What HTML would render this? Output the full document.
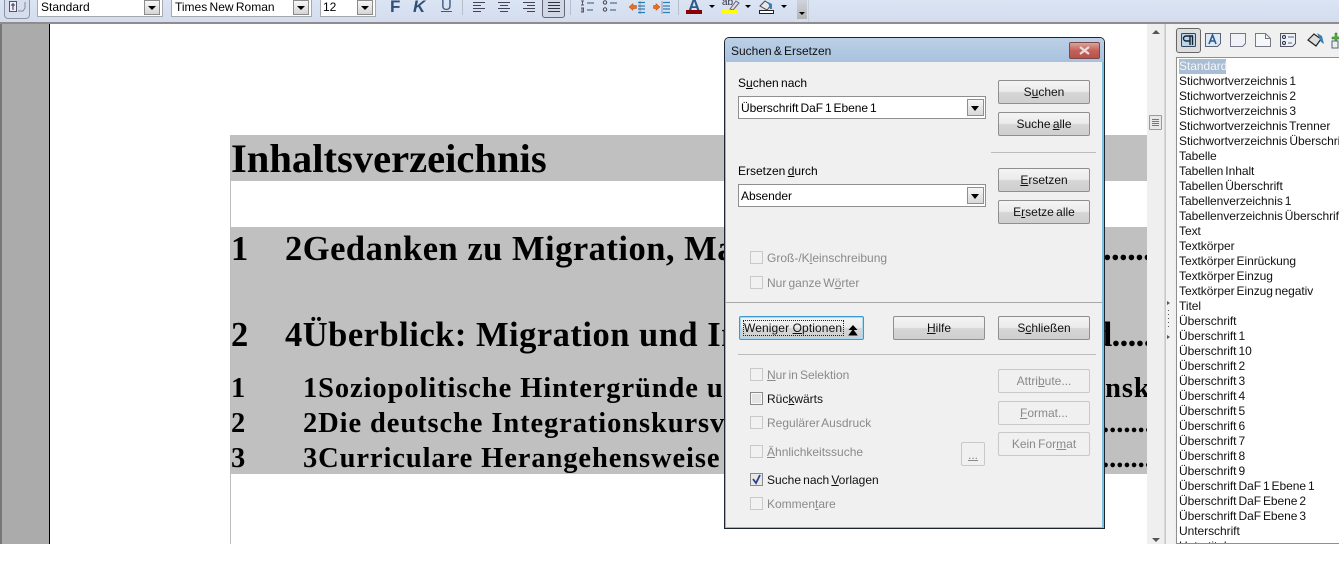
<!DOCTYPE html>
<html><head><meta charset="utf-8">
<style>
html,body{margin:0;padding:0;background:#fff}
#r{position:relative;width:1339px;height:562px;overflow:hidden;background:#fff;font-family:"Liberation Sans",sans-serif;font-size:12px;color:#000}
#r div,#r span.a,#r svg{position:absolute}
.t{white-space:nowrap;line-height:15px}
.dt{position:absolute;left:0;white-space:nowrap;font-family:"Liberation Serif",serif;font-weight:bold;color:#000}
.combo{background:#fff;border:1px solid #a6a9ae;box-sizing:border-box;height:18px;top:-1px}
.drop{width:16px;height:15px;top:0;right:2px;background:linear-gradient(#f6f6f6,#d5d5d5);border:1px solid #8a8a8a;box-sizing:border-box}
.drop:after{content:"";position:absolute;left:3px;top:5px;border:4px solid transparent;border-top:4px solid #000;border-bottom:0}
.btn{box-sizing:border-box;border:1px solid #8f8f8f;border-radius:2px;width:92px;height:24px;background:linear-gradient(#f4f4f4 0,#ebebeb 48%,#d6d6d6 52%,#cfcfcf 100%);text-align:center;line-height:22px;color:#111;word-spacing:-1px}
.btn.d{background:#f0f0f0;border-color:#c8c8c8;color:#8a8a8a}
.cb{width:13px;height:13px;box-sizing:border-box;border:1px solid #c9c9c9;background:#f1f1f1;left:750px}
.lb{left:767px;white-space:nowrap;line-height:15px;color:#8a8a8a;word-spacing:-1.2px}
.dd{box-sizing:border-box;border:1px solid #8f8f8f;background:#fff;left:738px;width:248px;height:23px}
.dd .tx{left:2px;top:4px;line-height:15px;white-space:nowrap;letter-spacing:-.05px;word-spacing:-1.3px}
.dd .dr{right:1px;top:2px;width:17px;height:17px;box-sizing:border-box;border:1px solid #8f8f8f;background:linear-gradient(#f6f6f6,#d8d8d8)}
.dd .dr:after{content:"";position:absolute;left:3px;top:6px;border:4px solid transparent;border-top:5px solid #000;border-bottom:0}
u{text-decoration:underline}
#list div{left:2px;margin-top:1px;white-space:nowrap;line-height:15px;letter-spacing:-.05px;word-spacing:-1.3px;color:#111}
</style></head><body>
<div id="r">
<!-- toolbar -->
<div style="left:0;top:0;width:1339px;height:22px;background:linear-gradient(#dbe4f3,#d3ddee)"></div>
<div style="left:0;top:22px;width:1339px;height:2px;background:#8d8d8d"></div>
<div style="left:4px;top:0;width:24px;height:18px;border:1px solid #8c95a3;border-top:0;border-radius:0 0 4px 4px;background:#d5deed"></div>
<svg style="left:8px;top:0" width="18" height="14" viewBox="0 0 18 14"><rect x="1.500" y="1.500" width="7" height="10" fill="#eef" stroke="#556"/><path d="M5 3v7M3 5h4" stroke="#334" fill="none"/><path d="M10 11h5l2-3V2" fill="none" stroke="#889"/></svg>
<div class="combo" style="left:37px;width:126px"><div class="t" style="left:3px;top:0">Standard</div><div class="drop"></div></div>
<div class="combo" style="left:171px;width:141px"><div class="t" style="left:3px;top:0;word-spacing:-1px">Times New Roman</div><div class="drop"></div></div>
<div class="combo" style="left:320px;width:56px"><div class="t" style="left:2px;top:0">12</div><div class="drop"></div></div>
<div class="t" style="left:390px;top:-1px;font-weight:bold;font-size:17px;color:#2f5078">F</div>
<div class="t" style="left:413px;top:-1px;font-weight:bold;font-style:italic;font-size:17px;color:#2f5078">K</div>
<div class="t" style="left:441px;top:-2px;font-size:15px;color:#3a5a80;text-decoration:underline">U</div>
<div style="left:462px;top:0;width:1px;height:15px;background:#b5bfce"></div>
<svg style="left:470px;top:0" width="100" height="14" viewBox="0 0 100 14" stroke="#445" fill="none"><path d="M3 2.500h12M3 5.500h8M3 8.500h12M3 11.500h8"/><path d="M28 2.500h12M30 5.500h8M28 8.500h12M30 11.500h8"/><path d="M53 2.500h12M57 5.500h8M53 8.500h12M57 11.500h8"/></svg>
<div style="left:542px;top:-3px;width:23px;height:21px;border:1px solid #667;border-radius:3px;background:#d0d8e6;box-sizing:border-box"></div>
<svg style="left:546px;top:1px" width="16" height="12" viewBox="0 0 16 12" stroke="#334" fill="none"><path d="M2 1.500h12M2 4.500h12M2 7.500h12M2 10.500h12"/></svg>
<div style="left:570px;top:0;width:1px;height:15px;background:#b5bfce"></div>
<svg style="left:578px;top:0" width="96" height="15" viewBox="0 0 96 15" fill="none"><path d="M3 1h3M4.500 1v4M3 5h3M3 8h3M3 12h3M4 8v4M5.500 8v4" stroke="#556"/><path d="M9 3h7M9 10h6" stroke="#357"/><circle cx="27" cy="2.500" r="1.700" stroke="#445"/><circle cx="27" cy="9.500" r="1.700" stroke="#445"/><path d="M32 3h7M32 10h6" stroke="#357"/>
<path d="M51 7l4-3.500v2h3.500v3H55v2z" fill="#e8701a" stroke="#b3470c" stroke-width=".5"/><path d="M60 2.500h7M60 6h7M60 9h7M60 12.500h7" stroke="#2b80b9" stroke-width="1.200"/><path d="M62 1v13" stroke="#667" stroke-width=".6"/>
<path d="M82 7l-4-3.500v2h-2.500v3H78v2z" fill="#e8701a" stroke="#b3470c" stroke-width=".5"/><path d="M85 2.500h7M85 6h7M85 9h7M85 12.500h7" stroke="#2b80b9" stroke-width="1.200"/><path d="M84 1v13" stroke="#667" stroke-width=".6"/></svg>
<div style="left:678px;top:0;width:1px;height:15px;background:#b5bfce"></div>
<div class="t" style="left:688px;top:-2px;font-weight:bold;font-size:17px;color:#2d5a8c">A</div>
<div style="left:686px;top:10px;width:16px;height:4px;background:#8b0000"></div>
<div style="left:709px;top:5px;border:3px solid transparent;border-top:3px solid #000;border-bottom:0"></div>
<div class="t" style="left:722px;top:-5px;font-size:10px;color:#334">ab</div>
<svg style="left:728px;top:0" width="12" height="10" viewBox="0 0 12 10"><path d="M2 9l6-8 3 2-6 7z" fill="#ddd" stroke="#667"/></svg>
<div style="left:722px;top:10px;width:16px;height:4px;background:#ffff00"></div>
<div style="left:745px;top:5px;border:3px solid transparent;border-top:3px solid #000;border-bottom:0"></div>
<svg style="left:757px;top:0" width="18" height="14" viewBox="0 0 18 14"><path d="M3 6l5-5 6 4-4 5z" fill="#e8e8e8" stroke="#445"/><path d="M11 2l4 2v5h-2z" fill="#3a7fb5"/><rect x="2.500" y="10.500" width="14" height="3" fill="#fff" stroke="#222"/></svg>
<div style="left:781px;top:5px;border:3px solid transparent;border-top:3px solid #000;border-bottom:0"></div>
<div style="left:797px;top:0;width:10px;height:19px;background:linear-gradient(#cfd4dc,#b4b4b4)"></div>
<div style="left:799px;top:12px;border:3px solid transparent;border-top:3px solid #000;border-bottom:0"></div>
<div style="left:808px;top:0;width:1px;height:22px;background:#c6cfde"></div>

<!-- document area -->
<div style="left:0;top:24px;width:2px;height:520px;background:#777"></div>
<div style="left:2px;top:24px;width:47px;height:520px;background:#ababab"></div>
<div style="left:49px;top:24px;width:1px;height:520px;background:#000"></div>
<div style="left:230px;top:135px;width:1px;height:409px;background:#bdbdbd"></div>
<div style="left:231px;top:135px;width:916px;height:46px;background:#c0c0c0"></div>
<div style="left:231px;top:227px;width:916px;height:247px;background:#c0c0c0"></div>
<div style="left:231px;top:135px;width:916px;height:340px;overflow:hidden">
<div class="dt" style="top:1px;font-size:40.600px;line-height:46px">Inhaltsverzeichnis</div>
<div class="dt" style="top:94px;font-size:34.500px;line-height:40px;letter-spacing:.5px">1<span style="position:absolute;left:54px">2Gedanken zu Migration, Massen</span></div>
<div class="dt" style="top:180px;font-size:34.500px;line-height:40px;letter-spacing:.5px">2<span style="position:absolute;left:54px">4Überblick: Migration und Integration</span></div>
<div class="dt" style="top:237px;font-size:28.500px;line-height:33px;letter-spacing:.9px">1<span style="position:absolute;left:72px">1Soziopolitische Hintergründe und</span></div>
<div class="dt" style="top:272px;font-size:28.500px;line-height:33px;letter-spacing:.9px">2<span style="position:absolute;left:72px">2Die deutsche Integrationskursverordnung</span></div>
<div class="dt" style="top:307px;font-size:28.500px;line-height:33px;letter-spacing:.9px">3<span style="position:absolute;left:72px">3Curriculare Herangehensweise</span></div>
<div class="dt" style="left:872px;top:94px;font-size:34.500px;line-height:40px;letter-spacing:-.6px">......</div>
<div class="dt" style="left:862px;top:180px;font-size:34.500px;line-height:40px;letter-spacing:-.6px">d.....</div>
<div class="dt" style="left:859px;top:237px;font-size:28.500px;line-height:33px;letter-spacing:.9px">onsk</div>
<div class="dt" style="left:871px;top:272px;font-size:28.500px;line-height:33px">.......</div>
<div class="dt" style="left:871px;top:307px;font-size:28.500px;line-height:33px">.......</div>
</div>

<!-- scrollbar -->
<div style="left:1147px;top:24px;width:17px;height:520px;background:#efefef;border-right:1px solid #d8d8d8"></div>
<div style="left:1152px;top:30px;border:4px solid transparent;border-bottom:4px solid #555;border-top:0"></div>
<div style="left:1149px;top:115px;width:13px;height:15px;box-sizing:border-box;border:1px solid #9a9a9a;background:#e8e8e8;border-radius:1px"></div>
<svg style="left:1152px;top:118px" width="8" height="9" viewBox="0 0 8 9" stroke="#777"><path d="M0 1.500h7M0 3.500h7M0 5.500h7M0 7.500h7"/></svg>
<div style="left:1152px;top:538px;border:4px solid transparent;border-top:4px solid #555;border-bottom:0"></div>

<div style="left:1165px;top:24px;width:7px;height:520px;background:#f2f2f2;border-left:1px solid #c9c9c9;border-right:1px solid #8f8f8f"></div>
<svg style="left:1166px;top:300px" width="5" height="40" viewBox="0 0 5 40" fill="#555"><path d="M1 1l3 2-3 2zM1 35l3 2-3 2z"/><path d="M2 10h1v1H2zM2 14h1v1H2zM2 18h1v1H2zM2 22h1v1H2zM2 26h1v1H2z"/></svg>

<!-- stylist panel -->
<div style="left:1173px;top:24px;width:166px;height:520px;background:#f0f0f0"></div>
<div style="left:1176px;top:28px;width:25px;height:25px;box-sizing:border-box;border:1px solid #666;border-radius:3px;background:#ddd"></div>
<svg style="left:1180px;top:32px" width="159" height="18" viewBox="0 0 159 18" fill="none">
<rect x="1.500" y="1.500" width="14" height="13" fill="#bcd6e8" stroke="#345" rx="1"/><path d="M6 4h7M10 4v9M12.500 4v9M6 4a2.500 2.500 0 0 0 0 5h4" stroke="#123" stroke-width="1.400"/>
<path d="M25.500 1.500h15v10l-3 3h-12z" fill="#dfe9f3" stroke="#567"/><path d="M29 12l3.500-9 3.500 9M30 9h5" stroke="#2d5a8c" stroke-width="1.600"/>
<path d="M50.500 1.500h15v10l-3 3h-12z" fill="#eef2f6" stroke="#778"/>
<path d="M75.500 1.500h10l5 5v8h-15z" fill="#f4f6f8" stroke="#778"/><path d="M85.500 1.500v5h5" stroke="#778"/>
<path d="M100.500 1.500h15v10l-3 3h-12z" fill="#eef2f6" stroke="#556"/><circle cx="104" cy="5" r="1.500" stroke="#234"/><circle cx="104" cy="11" r="1.500" stroke="#234"/><path d="M108 5h6M108 11h4" stroke="#568"/>
<path d="M128 8l6-6 7 5-5 7z" fill="#ddd" stroke="#222" stroke-width="1.200"/><path d="M137 1l5 3 2 8-3-2z" fill="#3a7fb5"/>
<path d="M155 1v4h-3v2h3v3h2V7h3V5h-3V1z" fill="#4cae3c" stroke="#2b7a20" stroke-width=".5"/><rect x="152" y="9" width="6" height="7" fill="#eee" stroke="#567"/>
</svg>
<div id="list" style="left:1176px;top:57px;width:163px;height:487px;background:#fff;border:1px solid #8f8f8f;border-right:0;box-sizing:border-box;overflow:hidden">
<div style="top:0;width:47px;height:15px;background:#a9bdd3"></div>
<div style="top:0;color:#f4f6f8">Standard</div>
<div style="top:15px">Stichwortverzeichnis 1</div>
<div style="top:30px">Stichwortverzeichnis 2</div>
<div style="top:45px">Stichwortverzeichnis 3</div>
<div style="top:60px">Stichwortverzeichnis Trenner</div>
<div style="top:75px">Stichwortverzeichnis Überschrift</div>
<div style="top:90px">Tabelle</div>
<div style="top:105px">Tabellen Inhalt</div>
<div style="top:120px">Tabellen Überschrift</div>
<div style="top:135px">Tabellenverzeichnis 1</div>
<div style="top:150px">Tabellenverzeichnis Überschrift</div>
<div style="top:165px">Text</div>
<div style="top:180px">Textkörper</div>
<div style="top:195px">Textkörper Einrückung</div>
<div style="top:210px">Textkörper Einzug</div>
<div style="top:225px">Textkörper Einzug negativ</div>
<div style="top:240px">Titel</div>
<div style="top:255px">Überschrift</div>
<div style="top:270px">Überschrift 1</div>
<div style="top:285px">Überschrift 10</div>
<div style="top:300px">Überschrift 2</div>
<div style="top:315px">Überschrift 3</div>
<div style="top:330px">Überschrift 4</div>
<div style="top:345px">Überschrift 5</div>
<div style="top:360px">Überschrift 6</div>
<div style="top:375px">Überschrift 7</div>
<div style="top:390px">Überschrift 8</div>
<div style="top:405px">Überschrift 9</div>
<div style="top:420px">Überschrift DaF 1 Ebene 1</div>
<div style="top:435px">Überschrift DaF Ebene 2</div>
<div style="top:450px">Überschrift DaF Ebene 3</div>
<div style="top:465px">Unterschrift</div>
<div style="top:480px">Untertitel</div>
</div>

<!-- dialog -->
<div style="left:724px;top:37px;width:381px;height:492px;box-sizing:border-box;border:1px solid #1c2530;border-radius:5px 5px 0 0;background:#7cc0e0"></div>
<div style="left:725px;top:38px;width:379px;height:24px;border-radius:4px 4px 0 0;background:linear-gradient(#bcd0e6,#a8c2de)"></div>
<div style="left:726px;top:62px;width:376px;height:465px;background:#f0f0f0"></div>
<div class="t" style="left:731px;top:44px;color:#111;word-spacing:-1.200px">Suchen &amp; Ersetzen</div>
<div style="left:1069px;top:42px;width:31px;height:17px;box-sizing:border-box;border:1px solid #7a4a4a;border-radius:2px;background:linear-gradient(#d9a49a,#c4625a 50%,#b85048)"></div>
<svg style="left:1078px;top:46px" width="13" height="9" viewBox="0 0 13 9"><path d="M2 1l9 7M11 1l-9 7" stroke="#e8dede" stroke-width="2.200"/></svg>

<div class="t" style="left:738px;top:76px;word-spacing:-1px">S<u>u</u>chen nach</div>
<div class="dd" style="top:96px"><div class="tx">Überschrift DaF 1 Ebene 1</div><div class="dr"></div></div>
<div class="btn" style="left:998px;top:80px">S<u>u</u>chen</div>
<div class="btn" style="left:998px;top:112px">Suche <u>a</u>lle</div>
<div style="left:991px;top:152px;width:105px;height:1px;background:#bcbcbc"></div>
<div class="t" style="left:738px;top:164px;word-spacing:-1px">Ersetzen <u>d</u>urch</div>
<div class="dd" style="top:184px"><div class="tx">Absender</div><div class="dr"></div></div>
<div class="btn" style="left:998px;top:168px"><u>E</u>rsetzen</div>
<div class="btn" style="left:998px;top:200px">E<u>r</u>setze alle</div>

<div class="cb" style="top:251px"></div><div class="lb" style="top:251px">Groß-/K<u>l</u>einschreibung</div>
<div class="cb" style="top:276px"></div><div class="lb" style="top:276px">Nur ganze W<u>ö</u>rter</div>

<div style="left:726px;top:302px;width:376px;height:1px;background:#a8a8a8"></div>
<div class="btn" style="left:739px;top:316px;width:125px;border-color:#3a9bd0;box-shadow:inset 0 0 0 1px #a8d8f0;text-align:left;padding-left:4px;line-height:22px;color:#111;letter-spacing:.1px;word-spacing:0">Weniger <u>O</u>ptionen</div>
<div style="left:743px;top:320px;width:101px;height:16px;border:1px dotted #222;box-sizing:border-box"></div>
<svg style="left:848px;top:325px" width="10" height="11" viewBox="0 0 10 11" fill="#000"><path d="M5 0l4.500 5H.5zM5 4l4.800 6.500H.2z"/></svg>
<div class="btn" style="left:893px;top:316px"><u>H</u>ilfe</div>
<div class="btn" style="left:998px;top:316px">S<u>c</u>hließen</div>
<div style="left:738px;top:354px;width:358px;height:1px;background:#bcbcbc"></div>

<div class="cb" style="top:368px"></div><div class="lb" style="top:368px"><u>N</u>ur in Selektion</div>
<div class="cb" style="top:392px;border-color:#8a8a8a;background:#e4e4e4;box-shadow:inset 0 0 0 1px #f8f8f8"></div><div class="lb" style="top:392px;color:#111">Rüc<u>k</u>wärts</div>
<div class="cb" style="top:416px"></div><div class="lb" style="top:416px">Re<u>g</u>ulärer Ausdruck</div>
<div class="cb" style="top:445px"></div><div class="lb" style="top:445px"><u>Ä</u>hnlichkeitssuche</div>
<div class="cb" style="top:473px;border-color:#8a8a8a;background:#e8e8e8"></div>
<svg style="left:751px;top:474px" width="11" height="11" viewBox="0 0 11 11" fill="none"><path d="M2 5l3 4 4-8" stroke="#2c3f8c" stroke-width="1.800"/></svg>
<div class="lb" style="top:473px;color:#111">Suche nach <u>V</u>orlagen</div>
<div class="cb" style="top:497px"></div><div class="lb" style="top:497px">Kommen<u>t</u>are</div>

<div class="btn d" style="left:998px;top:369px">Attri<u>b</u>ute...</div>
<div class="btn d" style="left:998px;top:401px"><u>F</u>ormat...</div>
<div class="btn d" style="left:998px;top:432px">Kein For<u>m</u>at</div>
<div class="btn d" style="left:961px;top:442px;width:24px;line-height:24px"><u>...</u></div>

<div style="left:0;top:544px;width:724px;height:18px;background:#fff"></div>
<div style="left:724px;top:544px;width:615px;height:18px;background:#fff"></div>
</div>
</body></html>
